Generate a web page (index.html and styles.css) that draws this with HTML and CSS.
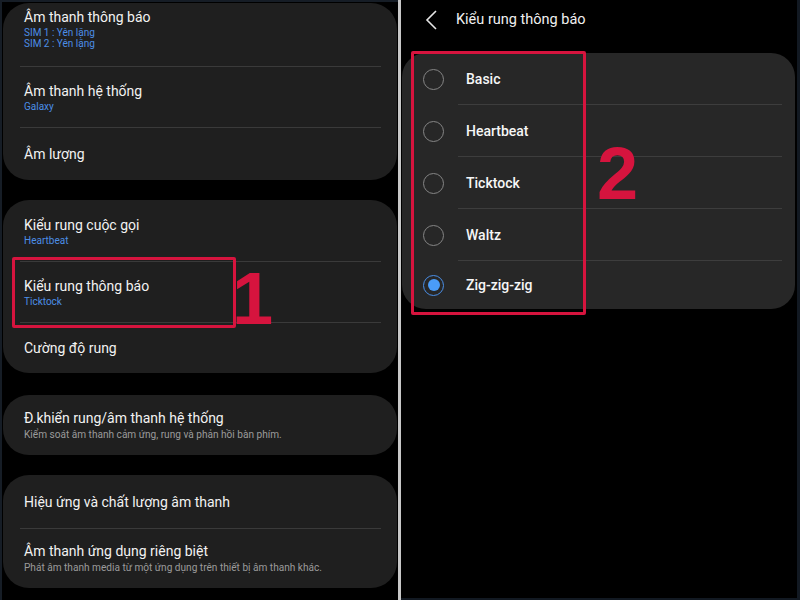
FILE: index.html
```html
<!DOCTYPE html>
<html lang="vi">

<head>
    <meta charset="UTF-8">
    <meta name="viewport" content="width=device-width, initial-scale=1.0">
    <title>Kiểu rung thông báo</title>
    <link rel="stylesheet" href="styles.css">
</head>

<body>
    <!-- Màn hình 1: Âm thanh và rung -->
    <div class="panel panel-left">
        <div class="card">
            <div class="row row-top">
                <div class="title">Âm thanh thông báo</div>
                <div class="sub blue">SIM 1 : Yên lặng</div>
                <div class="sub blue">SIM 2 : Yên lặng</div>
            </div>
            <div class="divider"></div>
            <div class="row h60">
                <div class="title">Âm thanh hệ thống</div>
                <div class="sub blue">Galaxy</div>
            </div>
            <div class="divider"></div>
            <div class="row h52">
                <div class="title">Âm lượng</div>
            </div>
        </div>

        <div class="card">
            <div class="row h61">
                <div class="title">Kiểu rung cuộc gọi</div>
                <div class="sub blue">Heartbeat</div>
            </div>
            <div class="divider"></div>
            <div class="row h60">
                <div class="title">Kiểu rung thông báo</div>
                <div class="sub blue">Ticktock</div>
            </div>
            <div class="divider"></div>
            <div class="row h50">
                <div class="title">Cường độ rung</div>
            </div>
        </div>

        <div class="card card-gap">
            <div class="row h60">
                <div class="title">Đ.khiển rung/âm thanh hệ thống</div>
                <div class="sub gray">Kiểm soát âm thanh cảm ứng, rung và phản hồi bàn phím.</div>
            </div>
        </div>

        <div class="card">
            <div class="row h53">
                <div class="title">Hiệu ứng và chất lượng âm thanh</div>
            </div>
            <div class="divider"></div>
            <div class="row h59">
                <div class="title">Âm thanh ứng dụng riêng biệt</div>
                <div class="sub gray">Phát âm thanh media từ một ứng dụng trên thiết bị âm thanh khác.</div>
            </div>
        </div>

        <div class="mark mark-1"></div>
        <div class="num num-1">1</div>
    </div>

    <div class="split"></div>

    <!-- Màn hình 2: danh sách kiểu rung -->
    <div class="panel panel-right">
        <div class="header">
            <svg class="back" width="14" height="20" viewBox="0 0 14 20">
                <polyline points="11,1 2,10 11,19" fill="none" stroke="#e6e6e6" stroke-width="1.6" />
            </svg>
            <span class="header-title">Kiểu rung thông báo</span>
        </div>

        <div class="card card-list">
            <div class="option">
                <span class="radio"></span>
                <span class="label">Basic</span>
            </div>
            <div class="option">
                <span class="radio"></span>
                <span class="label">Heartbeat</span>
            </div>
            <div class="option">
                <span class="radio"></span>
                <span class="label">Ticktock</span>
            </div>
            <div class="option">
                <span class="radio"></span>
                <span class="label">Waltz</span>
            </div>
            <div class="option last">
                <span class="radio checked"></span>
                <span class="label">Zig-zig-zig</span>
            </div>
        </div>

        <div class="mark mark-2"></div>
        <div class="num num-2">2</div>
    </div>
</body>

</html>
```

FILE: styles.css
```css
* {
    margin: 0;
    padding: 0;
    box-sizing: border-box;
    font-family: Roboto, "Noto Sans", sans-serif;
}

body {
    display: flex;
    width: 800px;
    height: 600px;
    overflow: hidden;
    background-color: #000;
}

.panel {
    position: relative;
    height: 600px;
    background-color: #000;
}

.panel-left {
    width: 398px;
    padding: 1px 1px 0 1px;
    border-left: 2px solid #161d26;
    border-top: 2px solid #161d26;
    display: flex;
    flex-direction: column;
    gap: 20px;
}

.split {
    width: 3px;
    height: 600px;
    background-color: #c8c8c8;
}

.panel-right {
    flex: 1;
    border-right: 3px solid #121922;
    border-bottom: 2px solid #121922;
    padding-left: 1px;
}

/* cartes */
.card {
    background-color: #1f1f1f;
    border-radius: 26px;
    display: flex;
    flex-direction: column;
}

.card-gap {
    margin-top: 2px;
}

.row {
    display: flex;
    flex-direction: column;
    justify-content: center;
    padding-left: 21px;
}

.row-top {
    justify-content: flex-start;
    height: 63px;
    padding-top: 5px;
}

.h50 { height: 50px; }
.h52 { height: 52px; }
.h53 { height: 53px; }
.h59 { height: 59px; }
.h60 { height: 60px; }
.h61 { height: 61px; }

.title {
    color: #f2f2f2;
    font-size: 14px;
    line-height: 18px;
}

.sub {
    font-size: 10px;
    line-height: 11px;
}

.row .sub:nth-child(2) {
    margin-top: 1px;
}

.blue {
    color: #4c8ee6;
}

.gray {
    color: #9b9b9b;
    font-size: 10.1px;
    line-height: 14px;
}

.divider {
    height: 1px;
    margin: 0 16px 0 17px;
    background-color: #3a3a3a;
}

/* ecran de droite */
.header {
    height: 53px;
    display: flex;
    align-items: center;
    padding-left: 23px;
    padding-bottom: 14px;
}

.back {
    margin-right: 17px;
}

.header-title {
    color: #f0f0f0;
    font-size: 14.5px;
}

.card-list {
    background-color: #272727;
    margin-right: 2px;
    border-radius: 24px;
}

.option {
    height: 52px;
    display: flex;
    align-items: center;
    position: relative;
}

.option::after {
    content: "";
    position: absolute;
    left: 56px;
    right: 13px;
    bottom: 0;
    height: 1px;
    background-color: #3d3d3d;
}

.option.last {
    height: 48px;
}

.option.last::after {
    display: none;
}

.radio {
    width: 21px;
    height: 21px;
    margin-left: 21px;
    border: 1.5px solid #858585;
    border-radius: 50%;
    display: flex;
    justify-content: center;
    align-items: center;
}

.radio.checked {
    border-color: #4a8fe8;
}

.radio.checked::before {
    content: "";
    width: 12px;
    height: 12px;
    border-radius: 50%;
    background-color: #4a9cf8;
}

.label {
    margin-left: 22px;
    color: #f6f6f6;
    font-size: 14px;
    font-weight: 500;
}

/* annotations rouges */
.mark {
    position: absolute;
    border: 3px solid #d6143e;
    border-radius: 2px;
}

.mark-1 {
    left: 10px;
    top: 255px;
    width: 224px;
    height: 71px;
}

.mark-2 {
    left: 10px;
    top: 51px;
    width: 175px;
    height: 264px;
}

.num {
    position: absolute;
    color: #d6143e;
    font-family: "Liberation Sans", Arial, sans-serif;
    font-weight: bold;
    font-size: 74px;
    line-height: 1;
}

.num-1 {
    left: 230px;
    top: 260px;
}

.num-2 {
    left: 196px;
    top: 137px;
}
```
